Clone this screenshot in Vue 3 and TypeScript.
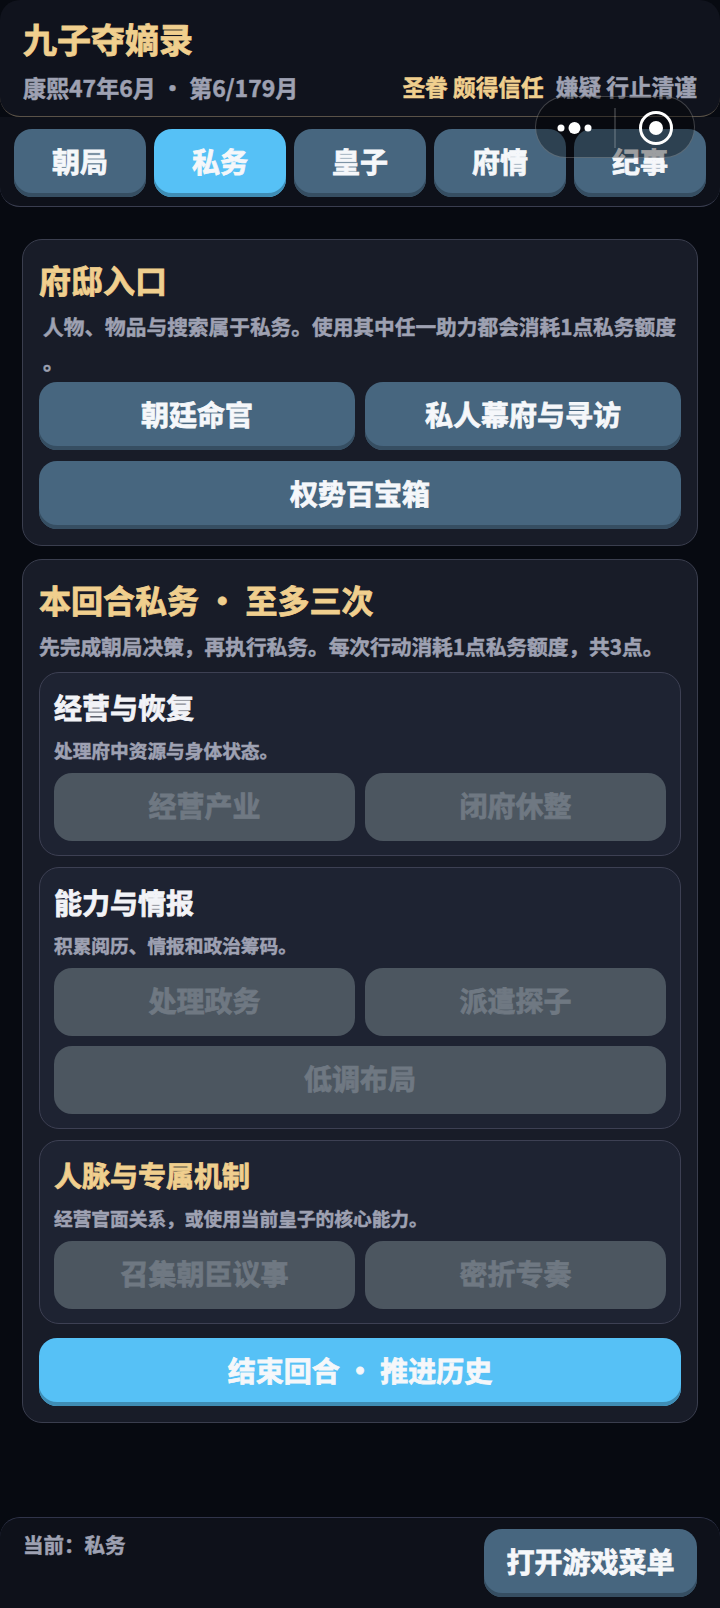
<script setup lang="ts">
interface Group {
  title: string
  desc: string
  gold?: boolean
  rows: string[][]
}
const tabs: string[] = ['朝局', '私务', '皇子', '府情', '纪事']
const active = '私务'
const groups: Group[] = [
  { title: '经营与恢复', desc: '处理府中资源与身体状态。', rows: [['经营产业', '闭府休整']] },
  { title: '能力与情报', desc: '积累阅历、情报和政治筹码。', rows: [['处理政务', '派遣探子'], ['低调布局']] },
  { title: '人脉与专属机制', desc: '经营官面关系，或使用当前皇子的核心能力。', gold: true, rows: [['召集朝臣议事', '密折专奏']] },
]
</script>

<template>
  <div class="page">
    <header class="head">
      <h1 class="game-title">九子夺嫡录</h1>
      <div class="head-row">
        <span class="muted">康熙47年6月 · 第6/179月</span>
        <span class="status">
          <span class="gold">圣眷 颇得信任</span>
          <span class="muted">嫌疑 行止清谨</span>
        </span>
      </div>
    </header>

    <nav class="tabs">
      <button v-for="t in tabs" :key="t" class="btn tab" :class="{ blue: t === active }">{{ t }}</button>
    </nav>

    <main class="main">
      <section class="card">
        <h2 class="card-title">府邸入口</h2>
        <p class="card-desc first">人物、物品与搜索属于私务。使用其中任一助力都会消耗1点私务额度<br />。</p>
        <div class="stack wide">
          <div class="row">
            <button class="btn">朝廷命官</button>
            <button class="btn">私人幕府与寻访</button>
          </div>
          <div class="row">
            <button class="btn">权势百宝箱</button>
          </div>
        </div>
      </section>

      <section class="card">
        <h2 class="card-title">本回合私务 · 至多三次</h2>
        <p class="card-desc second">先完成朝局决策，再执行私务。每次行动消耗1点私务额度，共3点。</p>
        <div class="groups">
          <div v-for="g in groups" :key="g.title" class="group">
            <h3 class="group-title" :class="{ gold: g.gold }">{{ g.title }}</h3>
            <p class="group-desc">{{ g.desc }}</p>
            <div class="stack">
              <div v-for="(r, i) in g.rows" :key="i" class="row">
                <button v-for="b in r" :key="b" class="btn off" disabled>{{ b }}</button>
              </div>
            </div>
          </div>
        </div>
        <button class="btn blue end">结束回合 · 推进历史</button>
      </section>
    </main>

    <footer class="foot">
      <span class="current">当前：私务</span>
      <button class="btn menu">打开游戏菜单</button>
    </footer>

    <div class="capsule">
      <svg width="160" height="62" viewBox="0 0 160 62" fill="none">
        <circle cx="26" cy="32" r="3.5" fill="#fff" />
        <circle cx="39.500" cy="32" r="6" fill="#fff" />
        <circle cx="53" cy="32" r="3.500" fill="#fff" />
        <path d="M80 12V52" stroke="rgba(255,255,255,.22)" stroke-width="1.500" />
        <circle cx="121" cy="32" r="15.500" stroke="#fff" stroke-width="3" />
        <circle cx="121" cy="32" r="7" fill="#fff" />
      </svg>
    </div>
  </div>
</template>

<style>
html, body { margin: 0; background: #070a11; }
</style>

<style scoped>
.page {
  position: relative;
  width: 720px;
  height: 1608px;
  overflow: hidden;
  display: flex;
  flex-direction: column;
  background: #070a11;
  font-family: "Noto Sans CJK SC", "Noto Sans", sans-serif;
  font-weight: 700;
  -webkit-text-stroke: .5px currentColor;
}
h1, h2, h3, p { margin: 0; }
.head {
  height: 117px;
  box-sizing: border-box;
  padding: 15px 23px 0;
  background: #10131d;
  border-bottom: 1px solid #5a5248;
  border-radius: 20px;
}
.game-title { font-size: 34px; line-height: 48px; color: #f0cf8e; -webkit-text-stroke-width: .8px; }
.head-row {
  display: flex;
  justify-content: space-between;
  align-items: center;
  margin-top: 8px;
  font-size: 23px;
  line-height: 32px;
}
.status { display: flex; gap: 12px; font-size: 22.700px; }
.muted { color: #9ea1b2; }
.gold { color: #f0cf8e; }
.tabs {
  height: 90px;
  box-sizing: border-box;
  display: flex;
  gap: 8px;
  padding: 12px 14px 0;
  background: #0e111a;
  border-bottom: 1px solid #3a3e50;
  border-radius: 0 0 20px 20px;
}
.btn {
  flex: 1 1 0;
  min-width: 0;
  height: 68px;
  box-sizing: border-box;
  padding: 0 0 4px;
  border: 0;
  border-radius: 18px;
  background: #47667f;
  box-shadow: inset 0 -4px 0 #364e62;
  color: #f5f7fa;
  font-family: inherit;
  font-size: 28px;
  font-weight: 700;
  line-height: 60px;
  -webkit-text-stroke: .8px currentColor;
}
.blue { background: #56c1f6; box-shadow: inset 0 -4px 0 #3f8db5; }
.off { background: #4c5660; box-shadow: none; color: #6f7882; }
.main {
  flex: 1;
  display: flex;
  flex-direction: column;
  gap: 13px;
  padding: 32px 22px 0;
}
.card {
  padding: 16px;
  background: #181c28;
  border: 1px solid #3a3e4e;
  border-radius: 20px;
}
.card-title { font-size: 32px; line-height: 46px; color: #f0cf8e; -webkit-text-stroke-width: .8px; }
.card-desc { margin-top: 7px; font-size: 20.700px; line-height: 35px; color: #9ea1b2; white-space: nowrap; }
.card-desc.first { padding-left: 4px; margin-bottom: 3px; }
.card-desc.second { margin-bottom: 8px; }
.stack { display: flex; flex-direction: column; gap: 10px; }
.stack.wide { gap: 11px; }
.row { display: flex; gap: 10px; }
.groups { display: flex; flex-direction: column; gap: 11px; }
.group {
  padding: 14px;
  background: #1e2332;
  border: 1px solid #3d4053;
  border-radius: 20px;
}
.group-title { font-size: 28px; line-height: 40px; color: #f2f3f7; -webkit-text-stroke-width: .8px; }
.group-title.gold { color: #f0cf8e; }
.group-desc { margin: 10px 0; font-size: 18.700px; line-height: 26px; color: #9ea1b2; }
.end { display: block; width: 100%; margin-top: 14px; }
.foot {
  height: 91px;
  box-sizing: border-box;
  display: flex;
  justify-content: space-between;
  align-items: flex-start;
  padding: 11px 23px 0;
  background: #0e111a;
  border-top: 1px solid #30344a;
  border-radius: 20px 20px 0 0;
}
.current { font-size: 20.500px; line-height: 30px; color: #9ea1b2; }
.menu { flex: none; width: 213px; }
.capsule {
  position: absolute;
  left: 535px;
  top: 96px;
  width: 160px;
  height: 62px;
  box-sizing: border-box;
  border: 1px solid rgba(255, 255, 255, .22);
  border-radius: 31px;
  background: rgba(0, 0, 0, .36);
}
.capsule svg { position: absolute; left: -1px; top: -1px; display: block; }
</style>
